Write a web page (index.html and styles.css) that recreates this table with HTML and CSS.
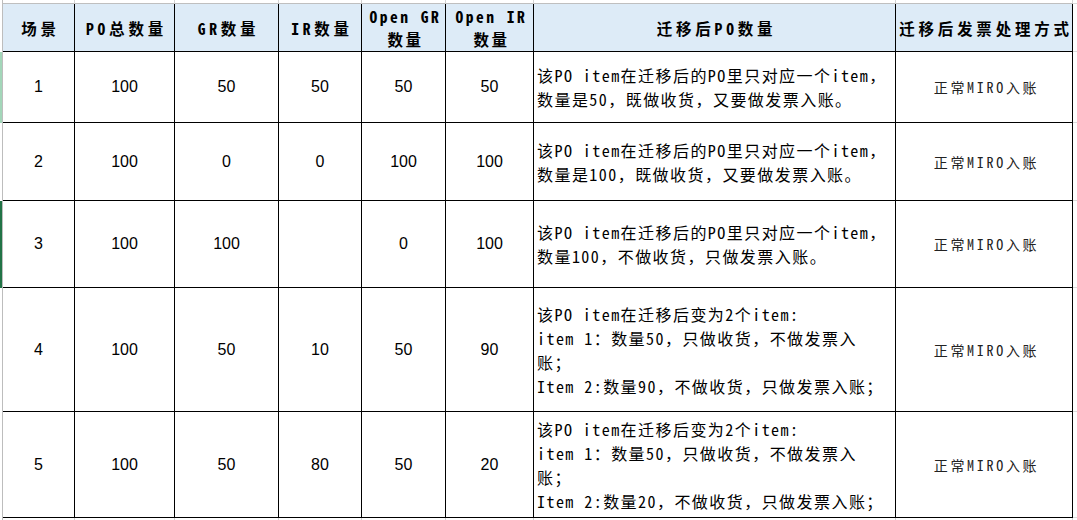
FILE: index.html
```html
<!DOCTYPE html>
<html lang="zh-CN">
<head>
<meta charset="utf-8">
<title>PO 迁移场景</title>
<link rel="stylesheet" href="styles.css">
</head>
<body>
<div class="sheet">
  <!-- top strip (row above header) -->
  <div class="gut"></div>
  <div class="top"></div><div class="top"></div><div class="top"></div><div class="top"></div>
  <div class="top"></div><div class="top"></div><div class="top"></div><div class="top"></div>
  <div class="tail"></div>

  <!-- header -->
  <div class="gut"></div>
  <div class="c hd">场景</div>
  <div class="c hd">PO总数量</div>
  <div class="c hd">GR数量</div>
  <div class="c hd">IR数量</div>
  <div class="c hd hd2">Open GR<br>数量</div>
  <div class="c hd hd2">Open IR<br>数量</div>
  <div class="c hd">迁移后PO数量</div>
  <div class="c hd">迁移后发票处理方式</div>
  <div class="tail"></div>

  <!-- row 1 -->
  <div class="gut gut-light"></div>
  <div class="c num">1</div>
  <div class="c num">100</div>
  <div class="c num">50</div>
  <div class="c num">50</div>
  <div class="c num">50</div>
  <div class="c num">50</div>
  <div class="c desc">该PO item在迁移后的PO里只对应一个item，<br>数量是50，既做收货，又要做发票入账。</div>
  <div class="c way">正常MIRO入账</div>
  <div class="tail"></div>

  <!-- row 2 -->
  <div class="gut"></div>
  <div class="c num">2</div>
  <div class="c num">100</div>
  <div class="c num">0</div>
  <div class="c num">0</div>
  <div class="c num">100</div>
  <div class="c num">100</div>
  <div class="c desc">该PO item在迁移后的PO里只对应一个item，<br>数量是100，既做收货，又要做发票入账。</div>
  <div class="c way">正常MIRO入账</div>
  <div class="tail"></div>

  <!-- row 3 -->
  <div class="gut gut-dark"></div>
  <div class="c num">3</div>
  <div class="c num">100</div>
  <div class="c num">100</div>
  <div class="c num"></div>
  <div class="c num">0</div>
  <div class="c num">100</div>
  <div class="c desc">该PO item在迁移后的PO里只对应一个item，<br>数量100，不做收货，只做发票入账。</div>
  <div class="c way">正常MIRO入账</div>
  <div class="tail"></div>

  <!-- row 4 -->
  <div class="gut"></div>
  <div class="c num">4</div>
  <div class="c num">100</div>
  <div class="c num">50</div>
  <div class="c num">10</div>
  <div class="c num">50</div>
  <div class="c num">90</div>
  <div class="c desc">该PO item在迁移后变为2个item:<br>item 1：数量50，只做收货，不做发票入<br>账；<br>Item 2:数量90，不做收货，只做发票入账；</div>
  <div class="c way">正常MIRO入账</div>
  <div class="tail"></div>

  <!-- row 5 -->
  <div class="gut"></div>
  <div class="c num">5</div>
  <div class="c num">100</div>
  <div class="c num">50</div>
  <div class="c num">80</div>
  <div class="c num">50</div>
  <div class="c num">20</div>
  <div class="c desc">该PO item在迁移后变为2个item:<br>item 1：数量50，只做收货，不做发票入<br>账；<br>Item 2:数量20，不做收货，只做发票入账；</div>
  <div class="c way">正常MIRO入账</div>
  <div class="tail"></div>

  <!-- bottom strip -->
  <div class="gut"></div>
  <div class="bot"></div><div class="bot"></div><div class="bot"></div><div class="bot"></div>
  <div class="bot"></div><div class="bot"></div><div class="bot"></div><div class="bot"></div>
  <div class="tail"></div>
</div>
</body>
</html>
```
FILE: styles.css
```css
html, body {
  margin: 0;
  padding: 0;
  background: #ffffff;
}

body {
  width: 1077px;
  height: 520px;
  overflow: hidden;
  font-family: "Liberation Sans", Arial, sans-serif;
  color: #000;
}

.sheet {
  display: grid;
  grid-template-columns: 3px 72px 100px 104px 83px 84px 88px 362px 177px 1fr;
  grid-template-rows: 4px 48px 71px 78px 87px 124px 106px 10px;
  width: 1077px;
}

.sheet > div {
  box-sizing: border-box;
  min-width: 0;
}

.gut {
  border-right: 1px solid #bdbdbd;
}

.gut-light {
  background: linear-gradient(to right, #a3d6b9 0 2px, transparent 2px);
}

.gut-dark {
  background: linear-gradient(to right, #217346 0 2px, transparent 2px);
}

.top {
  border-right: 1px solid #d4d4d4;
  border-bottom: 1px solid #bfbfbf;
}

.bot {
  border-right: 1px solid #d4d4d4;
}

.tail {
  border-bottom: 1px solid #dadada;
}

.c {
  border-right: 1px solid #000;
  border-bottom: 1px solid #000;
  display: flex;
  align-items: center;
  justify-content: center;
  text-align: center;
  white-space: nowrap;
}

.hd {
  background: #ddebf7;
  font-family: "Noto Sans Mono CJK SC", "Noto Sans CJK SC", sans-serif;
  font-weight: 700;
  font-size: 15.5px;
  letter-spacing: 3.8px;
  padding-left: 4px;
  line-height: 23px;
  padding-top: 2px;
}

.hd2 {
  letter-spacing: 2.5px;
  padding-top: 0;
}

.num {
  font-size: 16px;
}

.desc {
  justify-content: flex-start;
  text-align: left;
  padding-left: 3px;
  font-family: "Noto Sans Mono CJK SC", "Noto Sans CJK SC", monospace;
  font-size: 16px;
  letter-spacing: 1.45px;
  line-height: 24px;
}

.way {
  font-family: "Noto Sans Mono CJK SC", "Noto Sans CJK SC", sans-serif;
  font-size: 14px;
  letter-spacing: 2.7px;
  padding-left: 5px;
  color: #222;
}
```
